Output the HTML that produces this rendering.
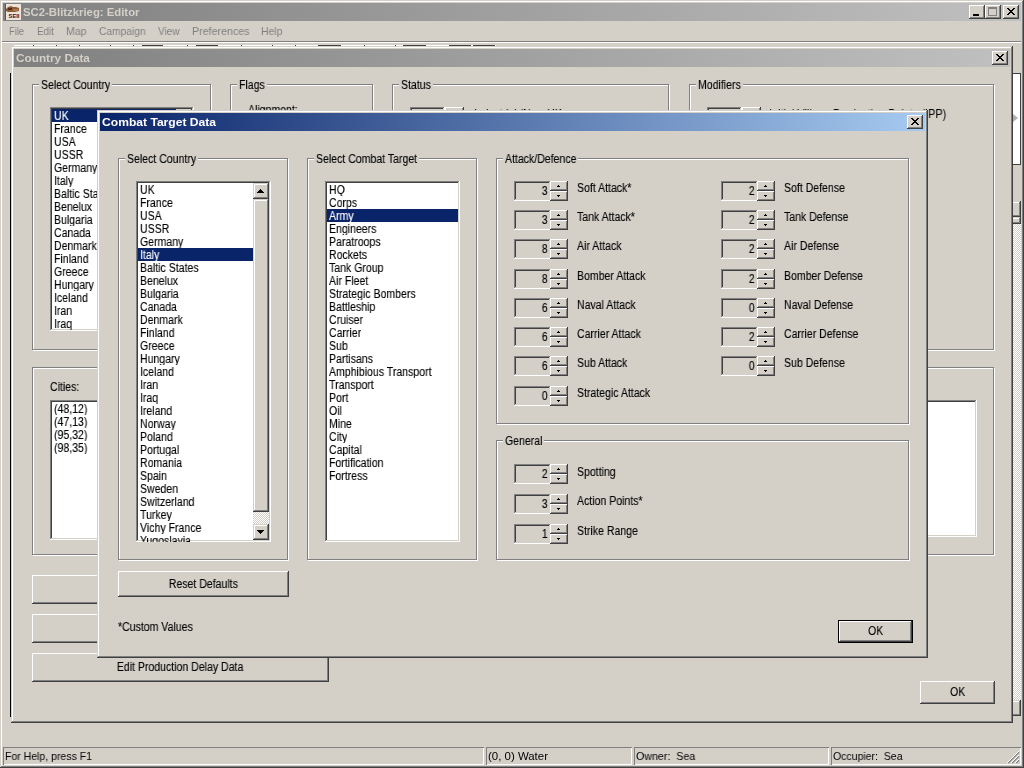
<!DOCTYPE html><html><head><meta charset="utf-8"><title>SC2-Blitzkrieg: Editor</title><style>
html,body{margin:0;padding:0;}
body{width:1024px;height:768px;overflow:hidden;background:#d4d0c8;position:relative;font-family:"Liberation Sans",sans-serif;font-size:12px;line-height:13px;color:#000;}
*{box-sizing:border-box;}
.a{position:absolute;}
.x{display:inline-block;will-change:transform;-webkit-text-stroke:0.12px;transform:scaleX(0.878);transform-origin:0 50%;white-space:nowrap;}
.xc{transform-origin:50% 50%;}
.xr{transform-origin:100% 50%;}
.win{position:absolute;background:#d4d0c8;box-shadow:inset -1px -1px 0 #404040,inset 1px 1px 0 #d4d0c8,inset -2px -2px 0 #808080,inset 2px 2px 0 #fff;}
.btn{position:absolute;background:#d4d0c8;box-shadow:inset -1px -1px 0 #404040,inset 1px 1px 0 #fff,inset -2px -2px 0 #808080,inset 2px 2px 0 #d4d0c8;text-align:center;}
.sunk{position:absolute;box-shadow:inset -1px -1px 0 #fff,inset 1px 1px 0 #808080,inset -2px -2px 0 #d4d0c8,inset 2px 2px 0 #404040;}
.grp{position:absolute;border:1px solid #808080;box-shadow:1px 1px 0 #fff,inset 1px 1px 0 #fff;}
.gl{position:absolute;top:-6px;left:6px;background:#d4d0c8;padding:0 2px;white-space:nowrap;overflow:hidden;}
.t{position:absolute;white-space:nowrap;}
.li{height:13px;line-height:15px;padding-left:2px;white-space:nowrap;overflow:hidden;}
.sel{background:#0a246a;color:#fff;}
.tb{position:absolute;height:18px;color:#fff;font-weight:bold;font-size:11px;line-height:18px;padding-left:2px;white-space:nowrap;}
.cb{position:absolute;width:16px;height:14px;background:#d4d0c8;box-shadow:inset -1px -1px 0 #404040,inset 1px 1px 0 #fff,inset -2px -2px 0 #808080;}
.sb{position:absolute;width:16px;height:16px;background:#d4d0c8;box-shadow:inset -1px -1px 0 #404040,inset 1px 1px 0 #d4d0c8,inset -2px -2px 0 #808080,inset 2px 2px 0 #fff;}
.trk{position:absolute;background-color:#fff;background-image:linear-gradient(45deg,#d4d0c8 25%,transparent 25%,transparent 75%,#d4d0c8 75%),linear-gradient(45deg,#d4d0c8 25%,transparent 25%,transparent 75%,#d4d0c8 75%);background-size:2px 2px;background-position:0 0,1px 1px;}
.ed{position:absolute;width:37px;height:20px;background:#d4d0c8;box-shadow:inset -1px -1px 0 #fff,inset 1px 1px 0 #808080,inset -2px -2px 0 #d4d0c8,inset 2px 2px 0 #404040;text-align:right;padding:4px 3px 0 0;}
.sp{position:absolute;width:18px;height:10px;background:#d4d0c8;box-shadow:inset -1px -1px 0 #404040,inset 1px 1px 0 #fff,inset -2px -2px 0 #808080;}
.sp i{position:absolute;left:7px;top:4px;width:3px;height:1px;background:#000;}
.sp i:after{content:"";position:absolute;left:1px;width:1px;height:1px;background:#000;}
.sp.u i{top:5px;}
.sp.u i:after{top:-1px;}
.sp.d i:after{top:1px;}
</style></head><body>
<div class="a" style="left:0;top:0;width:1024px;height:768px;background:#d4d0c8;box-shadow:inset -1px -1px 0 #404040,inset 1px 1px 0 #d4d0c8,inset -2px -2px 0 #808080,inset 2px 2px 0 #fff"></div>
<div class="tb" style="left:3px;top:3px;width:1018px;background:linear-gradient(90deg,#808080,#c0c0c0);color:#d4d0c8;padding-left:20px"><span style="display:inline-block;will-change:transform;white-space:pre;transform:scaleX(1.030);transform-origin:0 50%">SC2-Blitzkrieg: Editor</span></div>
<svg class="a" style="left:5px;top:4px" width="16" height="16" viewBox="0 0 16 16"><rect width="16" height="16" fill="#ece4dc"/><rect width="1" height="16" fill="#585858"/><path d="M1 5L3 3L6 2L8 3L11 3L14 4L14 7L10 8L3 8L1 7z" fill="#8c5c36"/><path d="M3 4h4v2h-4z" fill="#5a2a1a"/><path d="M8 5h5v2h-5z" fill="#a87848"/><text x="9" y="14" font-size="5.5" font-weight="bold" text-anchor="middle" textLength="11" lengthAdjust="spacingAndGlyphs" fill="#4a0a20" font-family="Liberation Sans, sans-serif">SEII</text></svg>
<div class="cb" style="left:969px;top:5px"><div class="a" style="left:4px;top:9px;width:6px;height:2px;background:#000"></div></div>
<div class="cb" style="left:985px;top:5px"><div class="a" style="left:3px;top:2px;width:9px;height:9px;border:1px solid #808080;border-top:2px solid #808080"></div></div>
<div class="cb" style="left:1003px;top:5px"><svg class="a" style="left:4px;top:3px" width="8" height="7" viewBox="0 0 8 7"><path d="M0 0h2v1h1v1h2v-1h1v-1h2v1h-1v1h-1v1h-1v1h1v1h1v1h1v1h-2v-1h-1v-1h-2v1h-1v1h-2v-1h1v-1h1v-1h1v-1h-1v-1h-1v-1h-1z" fill="#000"/></svg></div>
<div class="t" style="left:9px;top:25px;color:#808080;font-size:11px;line-height:13px"><span style="display:inline-block;will-change:transform;white-space:pre;transform:scaleX(0.850);transform-origin:0 50%">File</span></div>
<div class="t" style="left:36.5px;top:25px;color:#808080;font-size:11px;line-height:13px"><span style="display:inline-block;will-change:transform;white-space:pre;transform:scaleX(0.890);transform-origin:0 50%">Edit</span></div>
<div class="t" style="left:66px;top:25px;color:#808080;font-size:11px;line-height:13px"><span style="display:inline-block;will-change:transform;white-space:pre;transform:scaleX(0.960);transform-origin:0 50%">Map</span></div>
<div class="t" style="left:98.5px;top:25px;color:#808080;font-size:11px;line-height:13px"><span style="display:inline-block;will-change:transform;white-space:pre;transform:scaleX(0.930);transform-origin:0 50%">Campaign</span></div>
<div class="t" style="left:157.5px;top:25px;color:#808080;font-size:11px;line-height:13px"><span style="display:inline-block;will-change:transform;white-space:pre;transform:scaleX(0.910);transform-origin:0 50%">View</span></div>
<div class="t" style="left:191.5px;top:25px;color:#808080;font-size:11px;line-height:13px"><span style="display:inline-block;will-change:transform;white-space:pre;transform:scaleX(0.970);transform-origin:0 50%">Preferences</span></div>
<div class="t" style="left:261px;top:25px;color:#808080;font-size:11px;line-height:13px"><span style="display:inline-block;will-change:transform;white-space:pre;transform:scaleX(0.950);transform-origin:0 50%">Help</span></div>
<div class="a" style="left:2px;top:41px;width:1019px;height:1px;background:#808080"></div>
<div class="a" style="left:2px;top:42px;width:1019px;height:1px;background:#fff"></div>
<div class="a" style="left:14px;top:45px;width:482px;height:1px;background:#fff"></div>
<div class="a" style="left:33px;top:45px;width:1px;height:1px;background:#404040"></div>
<div class="a" style="left:56px;top:45px;width:1px;height:1px;background:#404040"></div>
<div class="a" style="left:79px;top:45px;width:1px;height:1px;background:#404040"></div>
<div class="a" style="left:110px;top:45px;width:1px;height:1px;background:#404040"></div>
<div class="a" style="left:133px;top:45px;width:1px;height:1px;background:#404040"></div>
<div class="a" style="left:187px;top:45px;width:1px;height:1px;background:#404040"></div>
<div class="a" style="left:241px;top:45px;width:1px;height:1px;background:#404040"></div>
<div class="a" style="left:272px;top:45px;width:1px;height:1px;background:#404040"></div>
<div class="a" style="left:295px;top:45px;width:1px;height:1px;background:#404040"></div>
<div class="a" style="left:364px;top:45px;width:1px;height:1px;background:#404040"></div>
<div class="a" style="left:395px;top:45px;width:1px;height:1px;background:#404040"></div>
<div class="a" style="left:142px;top:45px;width:21px;height:1px;background:#404040"></div>
<div class="a" style="left:196px;top:45px;width:22px;height:1px;background:#404040"></div>
<div class="a" style="left:318px;top:45px;width:23px;height:1px;background:#404040"></div>
<div class="a" style="left:403px;top:45px;width:23px;height:1px;background:#404040"></div>
<div class="a" style="left:449px;top:45px;width:22px;height:1px;background:#404040"></div>
<div class="a" style="left:473px;top:45px;width:22px;height:1px;background:#404040"></div>
<div class="a" style="left:10px;top:73px;width:1px;height:644px;background:#000"></div>
<div class="a" style="left:1012px;top:73px;width:9px;height:92px;background:#fff;border:1px solid #404040;border-left:none"></div>
<div class="a" style="left:1013px;top:114px;width:0;height:0;border-top:4px solid transparent;border-bottom:4px solid transparent;border-left:5px solid #b0b0b0"></div>
<div class="trk" style="left:1013px;top:223px;width:8px;height:478px"></div>
<div class="sb" style="left:1005px;top:201px;width:16px;height:16px"></div>
<div class="sb" style="left:1005px;top:217px;width:16px;height:7px"></div>
<div class="sb" style="left:1005px;top:700px;width:16px;height:16px"></div>
<div class="a" style="left:3px;top:747px;width:481px;height:18px;box-shadow:inset 1px 1px 0 #808080,inset -1px -1px 0 #fff;padding:3px 0 0 2px;font-size:11px;white-space:nowrap"><span style="display:inline-block;will-change:transform;white-space:pre;transform:scaleX(0.955);transform-origin:0 50%">For Help, press F1</span></div>
<div class="a" style="left:486px;top:747px;width:146px;height:18px;box-shadow:inset 1px 1px 0 #808080,inset -1px -1px 0 #fff;padding:3px 0 0 2px;font-size:11px;white-space:nowrap"><span style="display:inline-block;will-change:transform;white-space:pre;transform:scaleX(1.040);transform-origin:0 50%">(0, 0) Water</span></div>
<div class="a" style="left:634px;top:747px;width:195px;height:18px;box-shadow:inset 1px 1px 0 #808080,inset -1px -1px 0 #fff;padding:3px 0 0 2px;font-size:11px;white-space:nowrap"><span style="display:inline-block;will-change:transform;white-space:pre;transform:scaleX(0.970);transform-origin:0 50%">Owner:  Sea</span></div>
<div class="a" style="left:831px;top:747px;width:190px;height:18px;box-shadow:inset 1px 1px 0 #808080,inset -1px -1px 0 #fff;padding:3px 0 0 2px;font-size:11px;white-space:nowrap"><span style="display:inline-block;will-change:transform;white-space:pre;transform:scaleX(0.955);transform-origin:0 50%">Occupier:  Sea</span></div>
<svg class="a" style="left:1007px;top:751px" width="13" height="13" viewBox="0 0 13 13"><path d="M12 1L1 12M12 5L5 12M12 9L9 12" stroke="#808080" stroke-width="1.5"/><path d="M12 0L0 12M12 4L4 12M12 8L8 12" stroke="#fff" stroke-width="1"/></svg>
<div class="win" style="left:11px;top:46px;width:1002px;height:677px"></div>
<div class="tb" style="left:14px;top:49px;width:996px;background:linear-gradient(90deg,#808080,#c0c0c0);color:#d4d0c8"><span style="display:inline-block;will-change:transform;white-space:pre;transform:scaleX(1.070);transform-origin:0 50%">Country Data</span></div>
<div class="cb" style="left:992px;top:51px"><svg class="a" style="left:4px;top:3px" width="8" height="7" viewBox="0 0 8 7"><path d="M0 0h2v1h1v1h2v-1h1v-1h2v1h-1v1h-1v1h-1v1h1v1h1v1h1v1h-2v-1h-1v-1h-2v1h-1v1h-2v-1h1v-1h1v-1h1v-1h-1v-1h-1v-1h-1z" fill="#000"/></svg></div>
<div class="grp" style="left:32px;top:84px;width:179px;height:266px"><div class="gl" style="width:73px"><span class="x">Select Country</span></div></div>
<div class="grp" style="left:230px;top:84px;width:143px;height:266px"><div class="gl" style="width:30px"><span class="x">Flags</span></div></div>
<div class="grp" style="left:392px;top:84px;width:277px;height:266px"><div class="gl" style="width:34px"><span class="x">Status</span></div></div>
<div class="grp" style="left:689px;top:84px;width:305px;height:266px"><div class="gl" style="width:47px"><span class="x">Modifiers</span></div></div>
<div class="grp" style="left:32px;top:367px;width:962px;height:188px"></div>
<div class="sunk" style="left:50px;top:107px;width:144px;height:224px;background:#fff;padding:2px;overflow:hidden"><div style="width:124px"><div class="li sel"><span class="x">UK</span></div><div class="li"><span class="x">France</span></div><div class="li"><span class="x">USA</span></div><div class="li"><span class="x">USSR</span></div><div class="li"><span class="x">Germany</span></div><div class="li"><span class="x">Italy</span></div><div class="li"><span class="x">Baltic States</span></div><div class="li"><span class="x">Benelux</span></div><div class="li"><span class="x">Bulgaria</span></div><div class="li"><span class="x">Canada</span></div><div class="li"><span class="x">Denmark</span></div><div class="li"><span class="x">Finland</span></div><div class="li"><span class="x">Greece</span></div><div class="li"><span class="x">Hungary</span></div><div class="li"><span class="x">Iceland</span></div><div class="li"><span class="x">Iran</span></div><div class="li"><span class="x">Iraq</span></div><div class="li"><span class="x">Ireland</span></div></div></div>
<div class="sb" style="left:176px;top:109px"></div>
<div class="t" style="left:248px;top:104px"><span class="x">Alignment:</span></div>
<div class="ed" style="left:410px;top:107px;width:35px"></div><div class="sp u" style="left:445px;top:107px;width:19px"></div>
<div class="ed" style="left:707px;top:107px;width:35px"></div><div class="sp u" style="left:742px;top:107px;width:19px"></div>
<div class="t" style="left:474px;top:108px;color:#000"><span class="x">Industrial (New UK</span></div>
<div class="t" style="left:769px;top:108px"><span style="display:inline-block;will-change:transform;white-space:pre;transform:scaleX(0.908);transform-origin:0 50%">Initial Village Production Points (IPP)</span></div>
<div class="t" style="left:50px;top:381px"><span class="x">Cities:</span></div>
<div class="sunk" style="left:50px;top:400px;width:144px;height:140px;background:#fff;padding:2px"><div class="li"><span class="x">(48,12)</span></div><div class="li"><span class="x">(47,13)</span></div><div class="li"><span class="x">(95,32)</span></div><div class="li"><span class="x">(98,35)</span></div></div>
<div class="sunk" style="left:800px;top:400px;width:177px;height:137px;background:#fff"></div>
<div class="btn" style="left:32px;top:575px;width:297px;height:29px"></div>
<div class="btn" style="left:32px;top:614px;width:297px;height:29px"></div>
<div class="btn" style="left:32px;top:653px;width:297px;height:29px;padding-top:8px;padding-right:1px"><span class="x xc">Edit Production Delay Data</span></div>
<div class="btn" style="left:920px;top:681px;width:75px;height:23px;padding-top:5px"><span class="x xc">OK</span></div>
<div class="win" style="left:97px;top:110px;width:831px;height:548px"></div>
<div class="tb" style="left:100px;top:113px;width:825px;background:linear-gradient(90deg,#0a246a,#a6caf0)"><span style="display:inline-block;will-change:transform;white-space:pre;transform:scaleX(1.100);transform-origin:0 50%">Combat Target Data</span></div>
<div class="cb" style="left:907px;top:115px"><svg class="a" style="left:4px;top:3px" width="8" height="7" viewBox="0 0 8 7"><path d="M0 0h2v1h1v1h2v-1h1v-1h2v1h-1v1h-1v1h-1v1h1v1h1v1h1v1h-2v-1h-1v-1h-2v1h-1v1h-2v-1h1v-1h1v-1h1v-1h-1v-1h-1v-1h-1z" fill="#000"/></svg></div>
<div class="grp" style="left:118px;top:158px;width:170px;height:402px"><div class="gl" style="width:73px"><span class="x">Select Country</span></div></div>
<div class="grp" style="left:307px;top:158px;width:170px;height:402px"><div class="gl" style="width:105px"><span class="x">Select Combat Target</span></div></div>
<div class="grp" style="left:496px;top:158px;width:413px;height:266px"><div class="gl" style="width:75px"><span class="x">Attack/Defence</span></div></div>
<div class="grp" style="left:496px;top:440px;width:413px;height:120px"><div class="gl" style="width:41px"><span class="x">General</span></div></div>
<div class="sunk" style="left:136px;top:181px;width:135px;height:361px;background:#fff;padding:2px;overflow:hidden"><div style="width:115px"><div class="li"><span class="x">UK</span></div><div class="li"><span class="x">France</span></div><div class="li"><span class="x">USA</span></div><div class="li"><span class="x">USSR</span></div><div class="li"><span class="x">Germany</span></div><div class="li sel"><span class="x">Italy</span></div><div class="li"><span class="x">Baltic States</span></div><div class="li"><span class="x">Benelux</span></div><div class="li"><span class="x">Bulgaria</span></div><div class="li"><span class="x">Canada</span></div><div class="li"><span class="x">Denmark</span></div><div class="li"><span class="x">Finland</span></div><div class="li"><span class="x">Greece</span></div><div class="li"><span class="x">Hungary</span></div><div class="li"><span class="x">Iceland</span></div><div class="li"><span class="x">Iran</span></div><div class="li"><span class="x">Iraq</span></div><div class="li"><span class="x">Ireland</span></div><div class="li"><span class="x">Norway</span></div><div class="li"><span class="x">Poland</span></div><div class="li"><span class="x">Portugal</span></div><div class="li"><span class="x">Romania</span></div><div class="li"><span class="x">Spain</span></div><div class="li"><span class="x">Sweden</span></div><div class="li"><span class="x">Switzerland</span></div><div class="li"><span class="x">Turkey</span></div><div class="li"><span class="x">Vichy France</span></div><div class="li"><span class="x">Yugoslavia</span></div></div></div>
<div class="trk" style="left:253px;top:183px;width:16px;height:357px"></div>
<div class="sb" style="left:253px;top:183px"><svg class="a" style="left:4px;top:6px" width="7" height="4" viewBox="0 0 7 4"><path d="M3 0h1v1h1v1h1v1h1v1h-7v-1h1v-1h1v-1h1z" fill="#000"/></svg></div>
<div class="sb" style="left:253px;top:199px;height:313px"></div>
<div class="sb" style="left:253px;top:524px"><svg class="a" style="left:4px;top:6px" width="7" height="4" viewBox="0 0 7 4"><path d="M0 0h7v1h-1v1h-1v1h-1v1h-1v-1h-1v-1h-1v-1h-1z" fill="#000"/></svg></div>
<div class="sunk" style="left:325px;top:181px;width:135px;height:361px;background:#fff;padding:2px;overflow:hidden"><div class="li"><span class="x">HQ</span></div><div class="li"><span class="x">Corps</span></div><div class="li sel"><span class="x">Army</span></div><div class="li"><span class="x">Engineers</span></div><div class="li"><span class="x">Paratroops</span></div><div class="li"><span class="x">Rockets</span></div><div class="li"><span class="x">Tank Group</span></div><div class="li"><span class="x">Air Fleet</span></div><div class="li"><span class="x">Strategic Bombers</span></div><div class="li"><span class="x">Battleship</span></div><div class="li"><span class="x">Cruiser</span></div><div class="li"><span class="x">Carrier</span></div><div class="li"><span class="x">Sub</span></div><div class="li"><span class="x">Partisans</span></div><div class="li"><span class="x">Amphibious Transport</span></div><div class="li"><span class="x">Transport</span></div><div class="li"><span class="x">Port</span></div><div class="li"><span class="x">Oil</span></div><div class="li"><span class="x">Mine</span></div><div class="li"><span class="x">City</span></div><div class="li"><span class="x">Capital</span></div><div class="li"><span class="x">Fortification</span></div><div class="li"><span class="x">Fortress</span></div></div>
<div class="ed" style="left:514px;top:181px"><span class="x xr">3</span></div>
<div class="sp u" style="left:550px;top:181px"><i></i></div>
<div class="sp d" style="left:550px;top:191px"><i></i></div>
<div class="t" style="left:577px;top:182px"><span class="x">Soft Attack*</span></div>
<div class="ed" style="left:514px;top:210px"><span class="x xr">3</span></div>
<div class="sp u" style="left:550px;top:210px"><i></i></div>
<div class="sp d" style="left:550px;top:220px"><i></i></div>
<div class="t" style="left:577px;top:211px"><span class="x">Tank Attack*</span></div>
<div class="ed" style="left:514px;top:239px"><span class="x xr">8</span></div>
<div class="sp u" style="left:550px;top:239px"><i></i></div>
<div class="sp d" style="left:550px;top:249px"><i></i></div>
<div class="t" style="left:577px;top:240px"><span class="x">Air Attack</span></div>
<div class="ed" style="left:514px;top:269px"><span class="x xr">8</span></div>
<div class="sp u" style="left:550px;top:269px"><i></i></div>
<div class="sp d" style="left:550px;top:279px"><i></i></div>
<div class="t" style="left:577px;top:270px"><span class="x">Bomber Attack</span></div>
<div class="ed" style="left:514px;top:298px"><span class="x xr">6</span></div>
<div class="sp u" style="left:550px;top:298px"><i></i></div>
<div class="sp d" style="left:550px;top:308px"><i></i></div>
<div class="t" style="left:577px;top:299px"><span class="x">Naval Attack</span></div>
<div class="ed" style="left:514px;top:327px"><span class="x xr">6</span></div>
<div class="sp u" style="left:550px;top:327px"><i></i></div>
<div class="sp d" style="left:550px;top:337px"><i></i></div>
<div class="t" style="left:577px;top:328px"><span class="x">Carrier Attack</span></div>
<div class="ed" style="left:514px;top:356px"><span class="x xr">6</span></div>
<div class="sp u" style="left:550px;top:356px"><i></i></div>
<div class="sp d" style="left:550px;top:366px"><i></i></div>
<div class="t" style="left:577px;top:357px"><span class="x">Sub Attack</span></div>
<div class="ed" style="left:514px;top:386px"><span class="x xr">0</span></div>
<div class="sp u" style="left:550px;top:386px"><i></i></div>
<div class="sp d" style="left:550px;top:396px"><i></i></div>
<div class="t" style="left:577px;top:387px"><span class="x">Strategic Attack</span></div>
<div class="ed" style="left:721px;top:181px"><span class="x xr">2</span></div>
<div class="sp u" style="left:757px;top:181px"><i></i></div>
<div class="sp d" style="left:757px;top:191px"><i></i></div>
<div class="t" style="left:784px;top:182px"><span class="x">Soft Defense</span></div>
<div class="ed" style="left:721px;top:210px"><span class="x xr">2</span></div>
<div class="sp u" style="left:757px;top:210px"><i></i></div>
<div class="sp d" style="left:757px;top:220px"><i></i></div>
<div class="t" style="left:784px;top:211px"><span class="x">Tank Defense</span></div>
<div class="ed" style="left:721px;top:239px"><span class="x xr">2</span></div>
<div class="sp u" style="left:757px;top:239px"><i></i></div>
<div class="sp d" style="left:757px;top:249px"><i></i></div>
<div class="t" style="left:784px;top:240px"><span class="x">Air Defense</span></div>
<div class="ed" style="left:721px;top:269px"><span class="x xr">2</span></div>
<div class="sp u" style="left:757px;top:269px"><i></i></div>
<div class="sp d" style="left:757px;top:279px"><i></i></div>
<div class="t" style="left:784px;top:270px"><span class="x">Bomber Defense</span></div>
<div class="ed" style="left:721px;top:298px"><span class="x xr">0</span></div>
<div class="sp u" style="left:757px;top:298px"><i></i></div>
<div class="sp d" style="left:757px;top:308px"><i></i></div>
<div class="t" style="left:784px;top:299px"><span class="x">Naval Defense</span></div>
<div class="ed" style="left:721px;top:327px"><span class="x xr">2</span></div>
<div class="sp u" style="left:757px;top:327px"><i></i></div>
<div class="sp d" style="left:757px;top:337px"><i></i></div>
<div class="t" style="left:784px;top:328px"><span class="x">Carrier Defense</span></div>
<div class="ed" style="left:721px;top:356px"><span class="x xr">0</span></div>
<div class="sp u" style="left:757px;top:356px"><i></i></div>
<div class="sp d" style="left:757px;top:366px"><i></i></div>
<div class="t" style="left:784px;top:357px"><span class="x">Sub Defense</span></div>
<div class="ed" style="left:514px;top:464px"><span class="x xr">2</span></div>
<div class="sp u" style="left:550px;top:464px"><i></i></div>
<div class="sp d" style="left:550px;top:474px"><i></i></div>
<div class="t" style="left:577px;top:466px"><span class="x">Spotting</span></div>
<div class="ed" style="left:514px;top:494px"><span class="x xr">3</span></div>
<div class="sp u" style="left:550px;top:494px"><i></i></div>
<div class="sp d" style="left:550px;top:504px"><i></i></div>
<div class="t" style="left:577px;top:495px"><span class="x">Action Points*</span></div>
<div class="ed" style="left:514px;top:524px"><span class="x xr">1</span></div>
<div class="sp u" style="left:550px;top:524px"><i></i></div>
<div class="sp d" style="left:550px;top:534px"><i></i></div>
<div class="t" style="left:577px;top:525px"><span class="x">Strike Range</span></div>
<div class="btn" style="left:118px;top:571px;width:171px;height:26px;padding-top:7px"><span class="x xc">Reset Defaults</span></div>
<div class="t" style="left:118px;top:621px"><span class="x">*Custom Values</span></div>
<div class="a" style="left:838px;top:620px;width:75px;height:23px;background:#000"></div>
<div class="btn" style="left:839px;top:621px;width:73px;height:21px;padding-top:4px"><span class="x xc">OK</span></div>
</body></html>
